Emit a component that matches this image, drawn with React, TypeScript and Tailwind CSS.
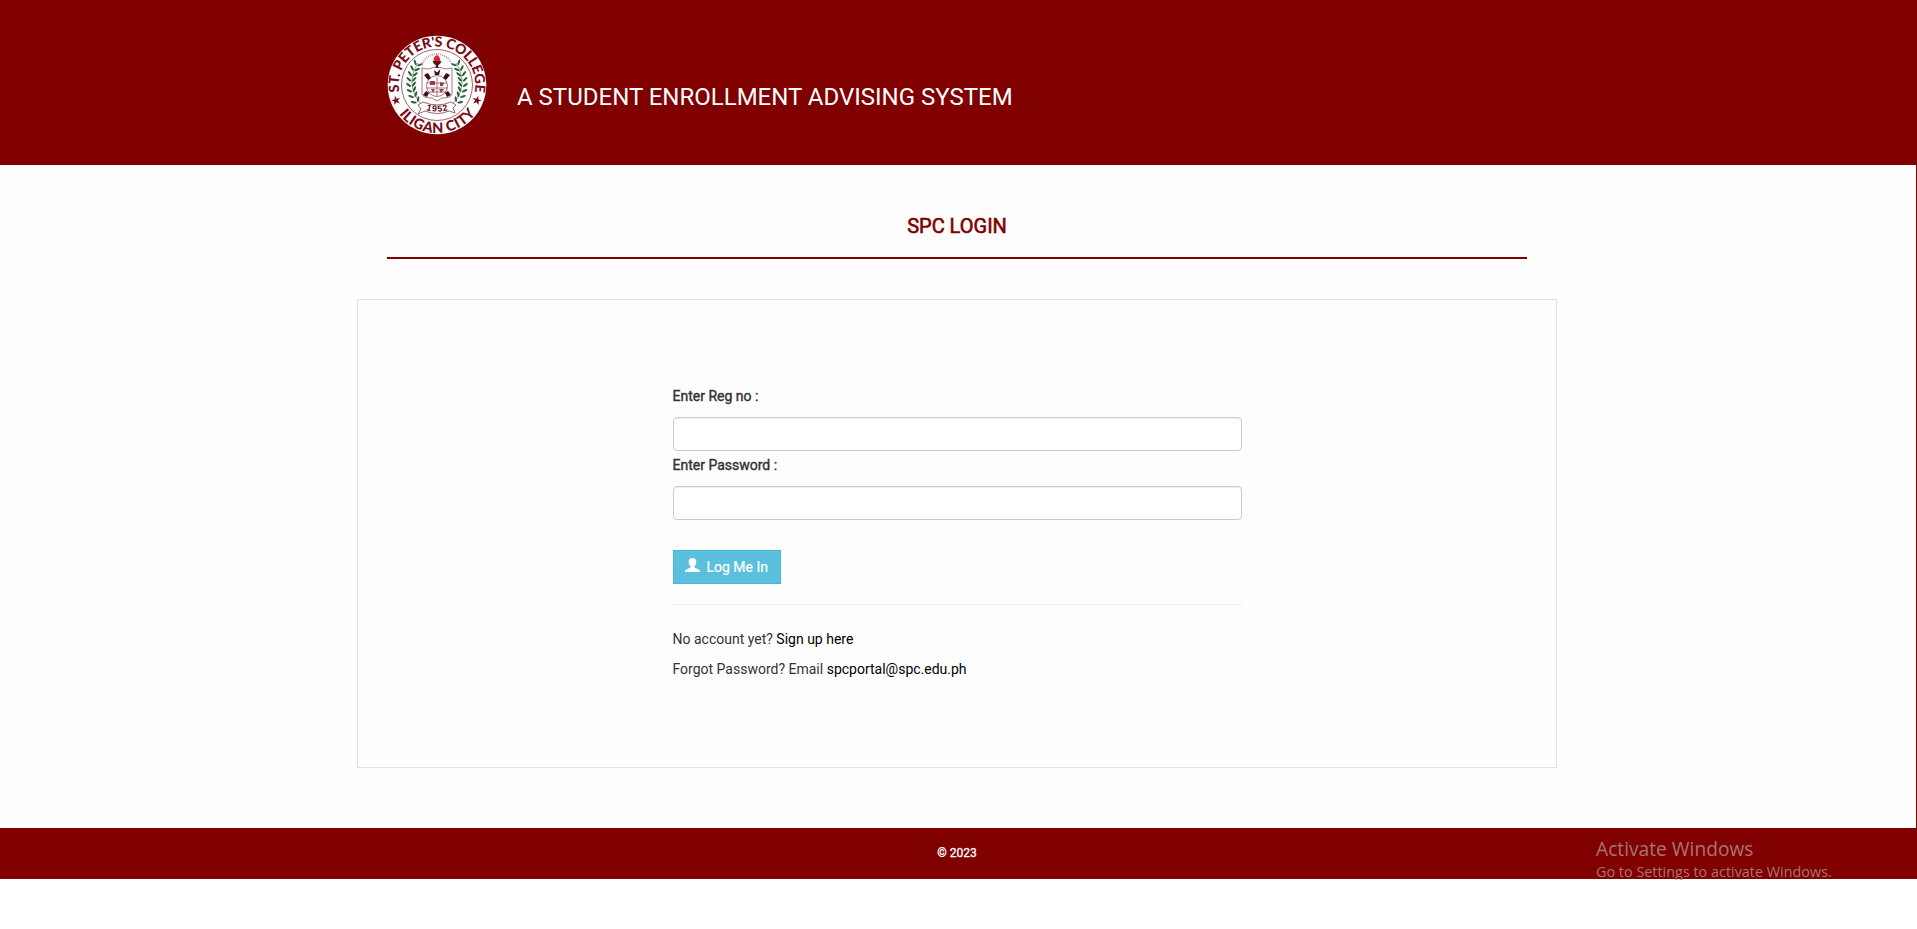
import React from "react";

const leaves = [0, 1, 2, 3, 4, 5, 6, 7];

function Laurel() {
  return (
    <g>
      <path d="M-19 -22 Q-33 0 -15 20" fill="none" stroke="#3a6b46" strokeWidth="0.6" />
      {leaves.map((i) => {
        const t = i / 7;
        const y = -20 + t * 37;
        const x = -25.6 + 5.5 * Math.pow(t * 2 - 1, 2);
        const deg = 26 - t * 62;
        return (
          <g key={i} transform={`translate(${x} ${y}) rotate(${deg})`} fill="#2a5e38">
            <ellipse cx="-2.7" cy="-1.6" rx="3" ry="1.1" transform="rotate(45 -2.7 -1.6)" />
            <ellipse cx="2.7" cy="-1.6" rx="3" ry="1.1" transform="rotate(-45 2.7 -1.6)" />
          </g>
        );
      })}
    </g>
  );
}

function Seal() {
  const star = "M0 -4.8 L1.1 -1.4 L4.6 -1.4 L1.8 0.6 L2.9 4 L0 1.9 L-2.9 4 L-1.8 0.6 L-4.6 -1.4 L-1.1 -1.4Z";
  return (
    <svg viewBox="-50 -50 100 100" className="block h-[100px] w-[100px] shrink-0">
      <circle r="49.3" fill="#fff" />
      <circle r="35.5" fill="none" stroke="#94505c" strokeWidth="0.9" />
      <defs>
        <path id="arcTop" d="M-37.6 7.3 A38.3 38.3 0 1 1 37.6 7.3" />
        <path id="arcBottom" d="M-38.6 28.5 A48 48 0 0 0 38.6 28.5" />
      </defs>
      <g fill="#7a0c18" fontFamily="Lato, 'Liberation Sans', sans-serif" fontWeight="900">
        <text fontSize="14">
          <textPath href="#arcTop" startOffset="0.5" textLength="134" lengthAdjust="spacing">ST. PETER'S COLLEGE</textPath>
        </text>
        <text fontSize="14.4">
          <textPath href="#arcBottom" startOffset="1" textLength="88" lengthAdjust="spacing">ILIGAN CITY</textPath>
        </text>
        <path d={star} transform="translate(-41 15.5) rotate(-15)" />
        <path d={star} transform="translate(40 15.5) rotate(15)" />
      </g>
      <Laurel />
      <g transform="scale(-1 1)">
        <Laurel />
      </g>
      <path d="M-15 -20 Q-12 -30 0 -31 Q12 -30 15 -20" fill="none" stroke="#a57882" strokeWidth="1.8" strokeDasharray="0.8 1.3" />
      <g fill="none" stroke="#8a3a48" strokeWidth="0.7">
        <path d="M-15 -17 Q-8 -15 -4 -17.5 H4 Q8 -15 15 -17 V9 Q14 13 5 13 L0 16 L-5 13 Q-14 13 -15 9Z" />
        <circle cy="1" r="10.5" />
        <path d="M-10 -2 H10 M-10.5 3 H10.5 M-9 7 H9 M0 -8 V11" />
      </g>
      <path d="M-3 -23 Q-4.5 -28 0 -30 Q4 -28 3 -23Z" fill="#ee1c25" />
      <path d="M-4.5 -24 H4.5 L3 -21 L1.3 -20 V-17 H-1.3 V-20 L-3 -21Z" fill="#4b1820" />
      <g fill="#3a1018">
        <path d="M-3 -15 L0 -12.5 L3.5 -16 L2 -10 H-2Z" />
        <path d="M-13 -10 L-9 -12 L-6 -7 L-9 -5Z M13 -10 L9 -12 L6 -7 L9 -5Z" />
        <path d="M-14 10 L-11 6 L-8 8 L-10 12Z M14 10 L11 6 L8 8 L10 12Z" />
      </g>
      <g fill="#94404e">
        <path d="M-7 -4 H-2 V0 H-7Z M3 -3 L7 -2 L6 1 L3 1Z M-6 4 H-2 L-4 8Z M2 4 H7 L4 8Z" />
      </g>
      <path d="M-19 20 L-14 17 Q0 23 14 17 L19 20 L16 23 L18 28 L12 26 Q0 31 -12 26 L-19 29 L-16 24Z" fill="#fff" stroke="#7a2030" strokeWidth="0.7" />
      <path id="ribbon" d="M-11 24.8 Q0 28.6 12 24.8" fill="none" />
      <text fill="#5b0c18" fontSize="8.8" fontWeight="700" fontFamily="'Liberation Sans', Arial, sans-serif">
        <textPath href="#ribbon" textLength="22.5">1952</textPath>
      </text>
    </svg>
  );
}

function UserIcon() {
  return (
    <svg viewBox="0 0 15 14" className="mt-[-4px] h-[14px] w-[15px]" fill="currentColor">
      <path d="M7.5 0C9.9 0 11.3 1.5 11.3 3.8 11.3 5.6 10.6 7.3 9.4 8.3 9.2 9.2 9.6 9.7 10.4 10.1L13.6 11.5C14.6 12 15 12.6 15 13.2V14H0V13.2C0 12.6.4 12 1.4 11.5L4.6 10.1C5.4 9.7 5.8 9.2 5.6 8.3 4.4 7.3 3.7 5.6 3.7 3.8 3.7 1.5 5.1 0 7.5 0Z" />
    </svg>
  );
}

function Field({ label, type }: { label: string; type: string }) {
  return (
    <label className="block">
      <span className="-ml-[0.5px] block pb-[8px] pt-[2px] leading-[25px] [-webkit-text-stroke:0.4px_#333]">{label}</span>
      <input
        type={type}
        className="block h-[34px] w-[569px] rounded-[4px] border border-[#ccc] bg-white px-3 shadow-[inset_0_1px_1px_rgba(0,0,0,0.075)] outline-none"
      />
    </label>
  );
}

export default function App() {
  return (
    <div className="relative h-[929px] overflow-hidden bg-white font-['Roboto',sans-serif] text-[14px] text-[#333]">
      <header className="h-[165px] bg-[#800000] pr-[3px]">
        <div className="mx-auto flex w-[1140px] pt-[35px]">
          <Seal />
          <h1 className="ml-[30px] mt-[44px] whitespace-nowrap text-[24px] leading-[36px] text-white">
            A STUDENT ENROLLMENT ADVISING SYSTEM
          </h1>
        </div>
      </header>

      <main className="h-[663px] border-r border-[#800000] bg-[#fefefe] pr-[2px]">
        <div className="mx-auto w-[1200px] pt-[46px]">
          <h2 className="mx-[30px] h-[48px] border-b-2 border-[#800000] text-center text-[20px] leading-[30px] text-[#800000] [-webkit-text-stroke:0.6px_#800000]">
            SPC LOGIN
          </h2>
          <section className="mt-[40px] h-[469px] border border-[#e2e2e2] pl-[315px] pt-[82px]">
            <Field label="Enter Reg no :" type="text" />
            <Field label="Enter Password :" type="password" />
            <button className="mt-[30px] flex h-[34px] w-[108px] items-center border border-[#46b8da] bg-[#5bc0de] pl-[11px] text-white">
              <UserIcon />
              <span className="ml-[6.5px] whitespace-nowrap [-webkit-text-stroke:0.2px_#fff]">Log Me In</span>
            </button>
            <hr className="mt-[20px] w-[569px] border-[#eee]" />
            <p className="-ml-[0.5px] mt-[19px] leading-[30px]">
              No account yet? <a className="text-black">Sign up here</a>
            </p>
            <p className="-ml-[0.5px] leading-[30px]">
              Forgot Password? Email <a className="text-black">spcportal@spc.edu.ph</a>
            </p>
          </section>
        </div>
      </main>

      <footer className="h-[51px] bg-[#800000] pr-[3px] text-center text-[12px] leading-[50px] text-white">
        <span className="[-webkit-text-stroke:0.3px_#fff]">© 2023</span>
      </footer>

      <div className="absolute left-[1596px] top-[836px] whitespace-nowrap font-['Open_Sans','Noto_Sans',sans-serif] text-[#a87575]">
        <div className="text-[19.2px] leading-[26px]">Activate Windows</div>
        <div className="h-[18px] overflow-hidden text-[14.4px] leading-[20px]">Go to Settings to activate Windows.</div>
      </div>
    </div>
  );
}
